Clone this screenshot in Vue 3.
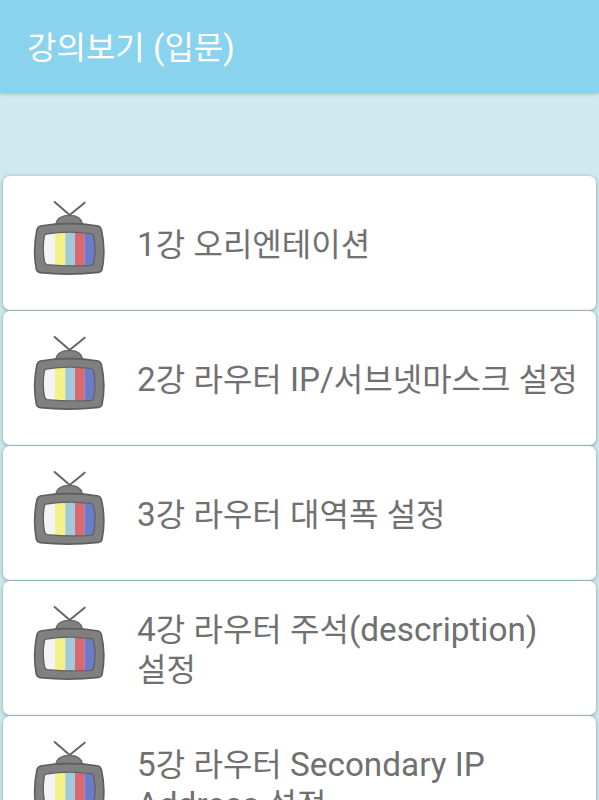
<script setup>
import { ref } from "vue";

const title = ref("강의보기 (입문)");
const lectures = ref([
    {id: 1, name: "1강 오리엔테이션"},
    {id: 2, name: "2강 라우터 IP/서브넷마스크 설정"},
    {id: 3, name: "3강 라우터 대역폭 설정"},
    {id: 4, name: "4강 라우터 주석(description) 설정"},
    {id: 5, name: "5강 라우터 Secondary IP Address 설정"},
]);

// hangul and latin runs are set at slightly different sizes
function splitText(text) {
    return text.match(/[가-힣]+|[^가-힣]+/g);
}

function isHangul(part) {
    return /[가-힣]/.test(part);
}
</script>


<template>
    <div class="screen">
        <header class="app-bar">
            <h1 class="app-title"><span v-for="part in splitText(title)" :class="{ hangul: isHangul(part) }">{{ part }}</span></h1>
        </header>
        <ul class="lecture-list">
            <li v-for="lecture in lectures" :key="lecture.id" class="lecture-card">
                <svg class="tv-icon" viewBox="30 20 240 240">
                    <path d="M104 35L149 74L194 37" fill="none" stroke="#656565" stroke-width="6" stroke-linecap="round" />
                    <path d="M108 101C110 84 127 75 148 75C170 75 184 84 187 100Z" fill="#808080" stroke="#666666" stroke-width="4" />
                    <path d="M61 107Q148 93 235 107Q242 109 244 117Q258 177 246 238Q244 245 236 246Q148 256 61 247Q52 246 49 237Q38 178 51 117Q53 109 61 107Z" fill="#808080" stroke="#5e5e5e" stroke-width="5" />
                    <path d="M78 131Q148 120 215 130Q219 131 221 137Q229 178 221 218Q219 224 214 225Q148 229 81 223Q76 222 74 216Q66 176 73 138Q74 132 78 131Z" fill="#f4f4f6" />
                    <path d="M105 128Q120 126 136 126V226Q120 226 105 225Z" fill="#f6f089" />
                    <path d="M136 126H165V226H136Z" fill="#a0cbdc" />
                    <path d="M165 126Q180 126 193 128V226L165 227Z" fill="#dc686d" />
                    <path d="M193 128L215 130Q219 131 221 137Q229 178 221 218Q219 224 214 225L193 226Z" fill="#6c7bc7" />
                    <path d="M78 131Q148 120 215 130Q219 131 221 137Q229 178 221 218Q219 224 214 225Q148 229 81 223Q76 222 74 216Q66 176 73 138Q74 132 78 131Z" fill="none" stroke="#626262" stroke-width="4" />
                </svg>
                <span class="lecture-name"><span v-for="part in splitText(lecture.name)" :class="{ hangul: isHangul(part) }">{{ part }}</span></span>
            </li>
        </ul>
    </div>
</template>


<style>
body {
    margin: 0;
    overflow: hidden;
}
</style>

<style scoped>
.screen {
    display: flex;
    flex-direction: column;
    height: 800px;
    overflow: hidden;
    background-color: #d0e9f0;
    font-family: Roboto, "Noto Sans CJK KR", sans-serif;
}
.app-bar {
    display: flex;
    align-items: center;
    flex-shrink: 0;
    height: 93px;
    padding-left: 27px;
    background-color: #89d3ee;
    box-shadow: 0 1px 4px rgba(0, 0, 0, 0.2);
}
.app-title {
    margin: 2px 0 0;
    font-size: 33.3px;
    font-weight: 400;
    line-height: 40px;
    color: #ffffff;
}
.hangul {
    font-size: 32px;
}
.lecture-list {
    display: flex;
    flex-direction: column;
    gap: 1px;
    margin: 83px 0 0;
    padding: 0 3px;
    list-style: none;
}
.lecture-card {
    display: flex;
    align-items: center;
    box-sizing: border-box;
    flex-shrink: 0;
    height: 134px;
    padding-left: 27px;
    padding-right: 16px;
    border-radius: 7px;
    background-color: #ffffff;
    box-shadow: 0 1px 4px rgba(40, 70, 80, 0.45);
}
.tv-icon {
    flex-shrink: 0;
    width: 80px;
    height: 80px;
    margin-top: -12px;
}
.lecture-name {
    margin: 4px 0 0 27px;
    font-size: 33.3px;
    line-height: 39px;
    word-break: keep-all;
    color: #707070;
}
</style>
